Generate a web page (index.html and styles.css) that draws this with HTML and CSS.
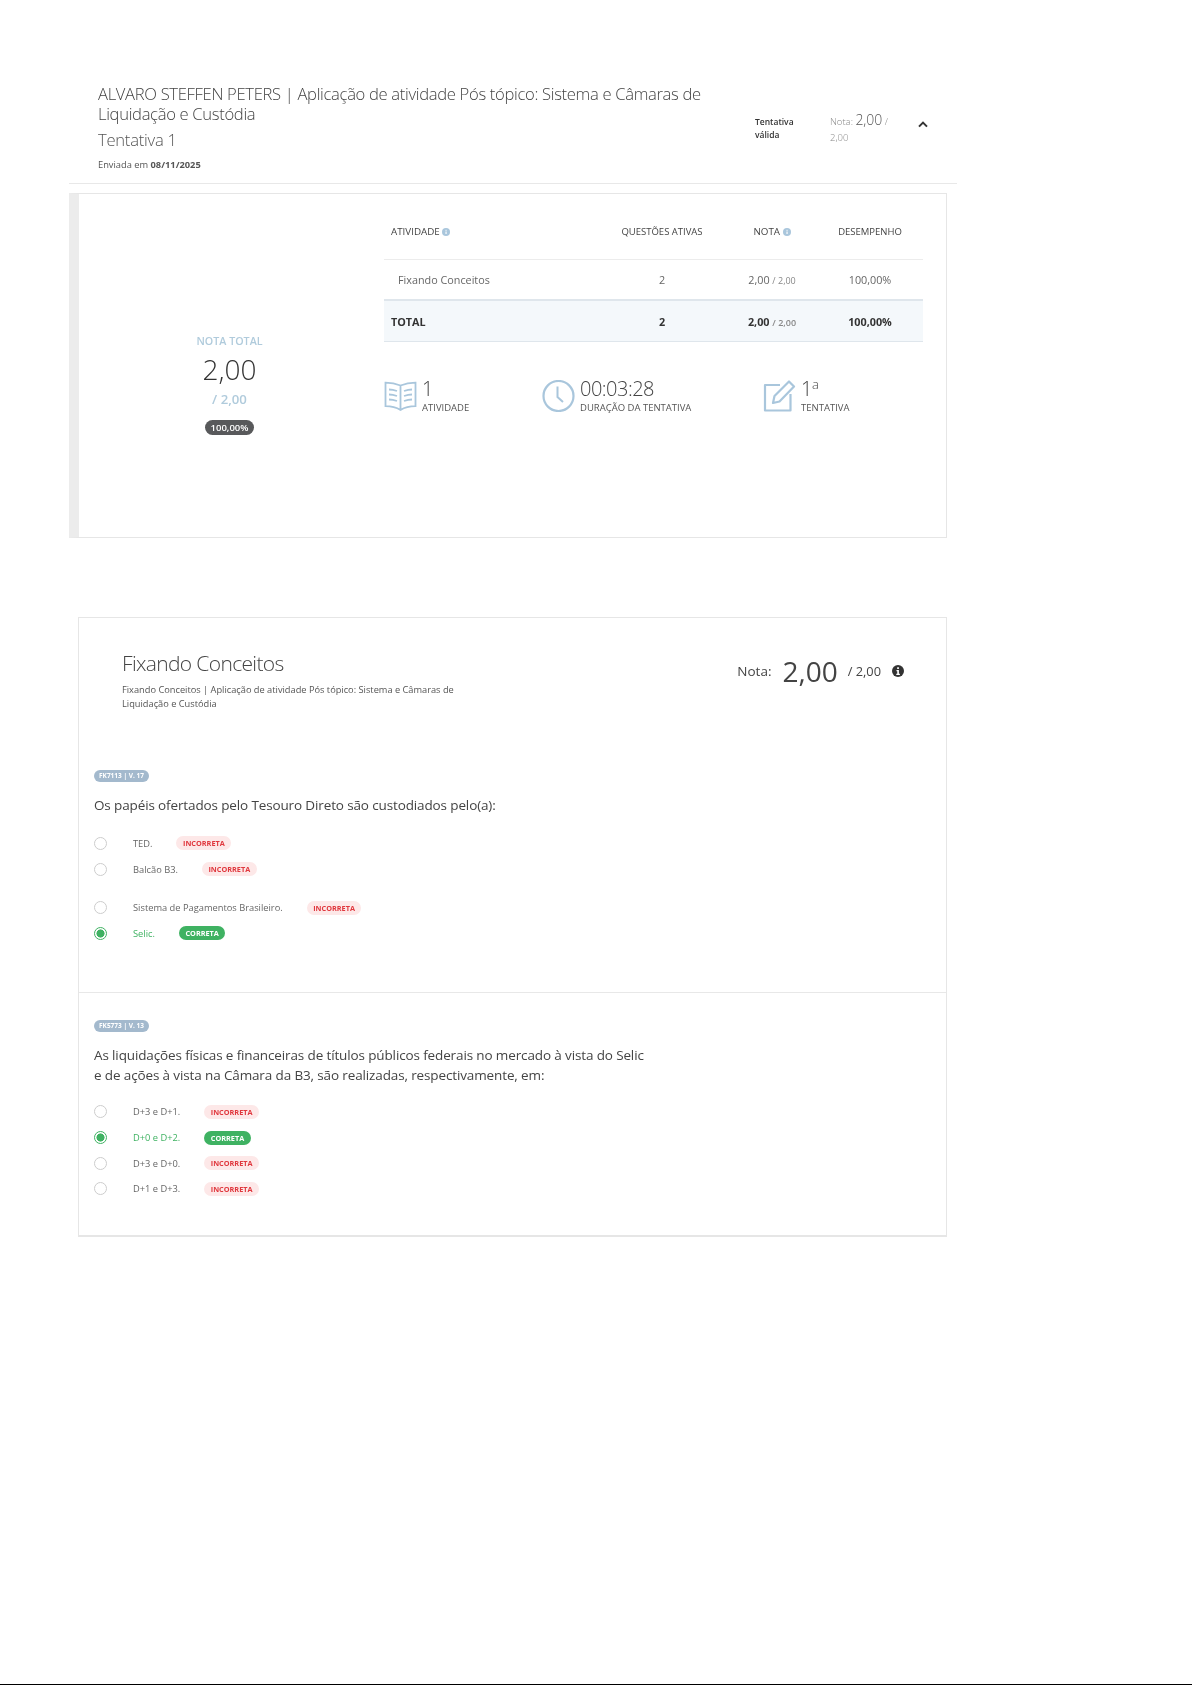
FILE: index.html
```html
<!DOCTYPE html>
<html lang="pt-BR">
<head>
<meta charset="utf-8">
<title>Tentativa 1</title>
<link rel="stylesheet" href="styles.css">
</head>
<body>
<div class="page">
  <header class="attempt-head">
    <div class="attempt-info">
      <h1 class="attempt-title">ALVARO STEFFEN PETERS | Aplicação de atividade Pós tópico: Sistema e Câmaras de Liquidação e Custódia</h1>
      <h2 class="attempt-num">Tentativa 1</h2>
      <p class="attempt-date">Enviada em <b>08/11/2025</b></p>
    </div>
    <div class="attempt-valid">Tentativa válida</div>
    <div class="attempt-grade"><span>Nota:</span> <span class="attempt-grade-big">2,00</span> <span>/</span> <span>2,00</span></div>
    <svg class="chevron" viewBox="0 0 10 7" width="10" height="7"><path d="M1 5.6 5 1.6l4 4" fill="none" stroke="#333" stroke-width="2"/></svg>
  </header>

  <section class="summary">
    <div class="total">
      <div class="total-label">NOTA TOTAL</div>
      <div class="total-value">2,00</div>
      <div class="total-max">/ 2,00</div>
      <div class="total-pill">100,00%</div>
    </div>
    <div class="detail">
      <div class="row row-head">
        <div class="c1">ATIVIDADE <svg class="info" viewBox="0 0 16 16"><circle cx="8" cy="8" r="8" fill="#a9c6dc"/><rect x="7" y="7" width="2.2" height="5" fill="#fff"/><rect x="7" y="3.6" width="2.2" height="2" fill="#fff"/></svg></div>
        <div class="c2">QUESTÕES ATIVAS</div>
        <div class="c3">NOTA <svg class="info" viewBox="0 0 16 16"><circle cx="8" cy="8" r="8" fill="#a9c6dc"/><rect x="7" y="7" width="2.2" height="5" fill="#fff"/><rect x="7" y="3.6" width="2.2" height="2" fill="#fff"/></svg></div>
        <div class="c4">DESEMPENHO</div>
      </div>
      <div class="row row-body">
        <div class="c1 indent">Fixando Conceitos</div>
        <div class="c2">2</div>
        <div class="c3">2,00 <small>/ 2,00</small></div>
        <div class="c4">100,00%</div>
      </div>
      <div class="row row-total">
        <div class="c1">TOTAL</div>
        <div class="c2">2</div>
        <div class="c3">2,00 <small>/ 2,00</small></div>
        <div class="c4">100,00%</div>
      </div>
      <div class="stats">
        <div class="stat stat-a">
          <svg class="stat-icon" viewBox="0 0 33 32" width="33" height="32" fill="none" stroke="#a9c6dc" stroke-width="1.800"><path d="M16.5 5.5C12 3.6 6 2.6 1.5 2.6v23.6c4.500 0 10.500 1 15 3.800 4.500-2.800 10.500-3.800 15-3.800V2.600c-4.500 0-10.500 1-15 2.900Zm0 0V30"/><path d="M5 9.500c2.500 0 5.500.6 8 1.500M5 14.500c2.500 0 5.500.6 8 1.500M5 19.500c2.500 0 5.500.6 8 1.500M28 9.500c-2.500 0-5.500.6-8 1.500M28 14.500c-2.500 0-5.500.6-8 1.500M28 19.500c-2.500 0-5.500.6-8 1.500"/></svg>
          <div><div class="stat-value">1</div><div class="stat-label">ATIVIDADE</div></div>
        </div>
        <div class="stat stat-b">
          <svg class="stat-icon" viewBox="0 0 33 32" width="33" height="32" fill="none" stroke="#a9c6dc" stroke-width="2.200"><circle cx="16.500" cy="16" r="15"/><path d="M15.500 6.500V17l5.500 5" stroke-width="2"/></svg>
          <div><div class="stat-value">00:03:28</div><div class="stat-label">DURAÇÃO DA TENTATIVA</div></div>
        </div>
        <div class="stat">
          <svg class="stat-icon" viewBox="0 0 33 32" width="33" height="32" fill="none" stroke="#a9c6dc" stroke-width="2.200" stroke-linejoin="round"><path d="M17 5H2v25.500h25.500V14"/><path d="M10 23l1.500-7L26 1.500l5 5L16.500 21.500 10 23Z"/></svg>
          <div><div class="stat-value">1<sup>a</sup></div><div class="stat-label">TENTATIVA</div></div>
        </div>
      </div>
    </div>
  </section>

  <section class="activity">
    <div class="activity-head">
      <div class="activity-info">
        <h2 class="activity-title">Fixando Conceitos</h2>
        <p class="activity-sub">Fixando Conceitos | Aplicação de atividade Pós tópico: Sistema e Câmaras de Liquidação e Custódia</p>
      </div>
      <div class="activity-grade">
        <span class="grade-label">Nota:</span>
        <span class="grade-big">2,00</span>
        <span class="grade-max">/ 2,00</span>
        <svg class="grade-info" viewBox="0 0 16 16" width="12" height="12"><circle cx="8" cy="8" r="8" fill="#333"/><path d="M6 6.800h3.200v5H10.500v1.500H5.700v-1.500H7V8.300H6Z" fill="#fff"/><rect x="6.900" y="3" width="2.300" height="2.300" fill="#fff"/></svg>
      </div>
    </div>

    <article class="question q1">
      <span class="tag">FK7113 | V. 17</span>
      <p class="q-text">Os papéis ofertados pelo Tesouro Direto são custodiados pelo(a):</p>
      <ul class="options">
        <li class="opt"><span class="radio"></span><span class="opt-text">TED.</span><span class="pill bad">INCORRETA</span></li>
        <li class="opt"><span class="radio"></span><span class="opt-text">Balcão B3.</span><span class="pill bad">INCORRETA</span></li>
        <li class="opt opt-far"><span class="radio"></span><span class="opt-text">Sistema de Pagamentos Brasileiro.</span><span class="pill bad">INCORRETA</span></li>
        <li class="opt opt-right"><span class="radio on"></span><span class="opt-text">Selic.</span><span class="pill good">CORRETA</span></li>
      </ul>
    </article>

    <article class="question q2">
      <span class="tag">FK5773 | V. 13</span>
      <p class="q-text">As liquidações físicas e financeiras de títulos públicos federais no mercado à vista do Selic e de ações à vista na Câmara da B3, são realizadas, respectivamente, em:</p>
      <ul class="options">
        <li class="opt"><span class="radio"></span><span class="opt-text">D+3 e D+1.</span><span class="pill bad">INCORRETA</span></li>
        <li class="opt opt-right"><span class="radio on"></span><span class="opt-text">D+0 e D+2.</span><span class="pill good">CORRETA</span></li>
        <li class="opt"><span class="radio"></span><span class="opt-text">D+3 e D+0.</span><span class="pill bad">INCORRETA</span></li>
        <li class="opt"><span class="radio"></span><span class="opt-text">D+1 e D+3.</span><span class="pill bad">INCORRETA</span></li>
      </ul>
    </article>
  </section>
  <div class="page-end"></div>
</div>
</body>
</html>
```
FILE: styles.css
```css
* { box-sizing: border-box; }
html, body { margin: 0; padding: 0; background: #fff; }
body { font-family: "Open Sans", "Liberation Sans", sans-serif; color: #555; }
.page { height: 1685px; display: flex; flex-direction: column; padding-top: 80px; overflow: hidden; }
h1, h2, p, ul { margin: 0; padding: 0; }
.attempt-head, .summary, .activity { filter: blur(0.3px); }

.attempt-head { margin-left: 69px; width: 888px; height: 104px; padding-left: 29px; border-bottom: 1px solid #e8e8e8; display: flex; align-items: flex-start; }
.attempt-info { width: 626px; }
.attempt-title { font-size: 16.600px; line-height: 19.500px; font-weight: 300; letter-spacing: -0.32px; color: #444; padding-top: 4px; }
.attempt-num { font-size: 16.600px; line-height: 22px; font-weight: 300; letter-spacing: -0.25px; color: #555; margin-top: 6px; }
.attempt-date { font-size: 9.300px; line-height: 14px; margin-top: 7px; color: #555; }
.attempt-valid { width: 48px; margin: 35px 0 0 31px; font-size: 8.500px; line-height: 13px; font-weight: 600; color: #333; }
.attempt-grade { width: 62px; margin: 32px 0 0 27px; font-size: 9.500px; line-height: 16px; font-weight: 300; color: #888; }
.attempt-grade-big { font-size: 14px; color: #555; }
.chevron { margin: 41px 0 0 26px; }

.summary { margin: 9px 0 0 69px; width: 878px; height: 345px; display: flex; border: 1px solid #e6e6e6; border-left: 10px solid #ececec; }
.total { width: 301px; padding-top: 37px; display: flex; flex-direction: column; align-items: center; justify-content: center; }
.total-label { font-size: 10.700px; line-height: 16px; font-weight: 600; color: #b0cbdc; }
.total-value { font-size: 28px; line-height: 38px; font-weight: 300; color: #333; margin-top: 1px; }
.total-max { font-size: 13.200px; line-height: 20px; font-weight: 600; color: #b0cbdc; margin-top: 1px; }
.total-pill { font-size: 9.500px; line-height: 15px; height: 15px; padding: 0 6px; margin-top: 11px; border-radius: 8px; background: #58595b; color: #fff; font-weight: 600; }

.detail { width: 539px; margin-left: 4px; }
.row { display: grid; grid-template-columns: 213px 130px 90px 106px; align-items: center; font-size: 10.800px; color: #666; }
.c2, .c3, .c4 { text-align: center; }
.c1 { padding-left: 7px; }
.indent { padding-left: 14px; }
.row small { font-size: 9px; color: #888; }
.row-head { height: 66px; padding-top: 10px; font-size: 9.500px; color: #444; border-bottom: 1px solid #ececec; }
.row-head .c1, .row-head .c3 { font-size: 9.800px; }
.row-body { height: 41px; border-bottom: 2px solid #dfe6ec; }
.row-total { height: 41px; font-weight: 700; color: #333; background: #f4f8fb; border-bottom: 1px solid #dfe6ec; }
.row-total small { font-weight: 600; }
.info { width: 8px; height: 8px; vertical-align: -0.5px; }

.stats { display: flex; margin-top: 34px; }
.stat { display: flex; align-items: center; gap: 5px; }
.stat-a { width: 158px; }
.stat-b { width: 221px; }
.stat-value { font-size: 20px; line-height: 25px; font-weight: 300; letter-spacing: -0.5px; color: #444; }
.stat-value sup { font-size: 13px; line-height: 0; vertical-align: 7px; }
.stat-label { font-size: 9.500px; line-height: 14px; color: #555; }

.activity { margin: 79px 0 0 78px; width: 869px; height: 620px; border: 1px solid #e6e6e6; border-bottom-width: 2px; }
.activity-head { height: 152px; padding: 29px 0 0 43px; display: flex; justify-content: space-between; }
.activity-info { width: 340px; }
.activity-title { font-size: 21px; line-height: 32px; font-weight: 300; letter-spacing: -0.65px; color: #444; }
.activity-sub { font-size: 9.250px; line-height: 14px; margin-top: 4px; color: #555; }
.activity-grade { display: flex; align-items: center; height: 42px; margin-right: 42px; margin-top: 3px; color: #444; }
.grade-label { font-size: 13.500px; }
.grade-big { font-size: 28px; margin-left: 11px; line-height: 42px; }
.grade-max { font-size: 12.800px; margin-left: 10px; }
.grade-info { margin-left: 11px; }

.question { padding: 0 0 0 15px; }
.q1 { height: 223px; border-bottom: 1px solid #e8e8e8; }
.q2 { padding-top: 27px; }
.tag { display: block; width: max-content; height: 12px; line-height: 12px; padding: 0 5px; font-size: 6.500px; font-weight: 700; color: #fff; background: #a3b9cd; border-radius: 6px; }
.q-text { width: 560px; font-size: 13.500px; line-height: 19.500px; letter-spacing: -0.13px; color: #444; margin-top: 14px; }
.options { list-style: none; margin-top: 15px; }
.q2 .options { margin-top: 14px; }
.opt { display: flex; align-items: center; height: 25.700px; font-size: 9.300px; color: #666; }
.opt-far { margin-top: 13px; }
.radio { width: 13px; height: 13px; border-radius: 50%; border: 1px solid #ccc; margin-right: 26px; flex: none; }
.radio.on { border-color: #3fb262; background: radial-gradient(circle, #3fb262 0 3.800px, #fff 4.300px); }
.opt-text { margin-right: 24px; }
.opt-right { color: #3fb262; }
.pill { height: 14px; line-height: 14px; padding: 0 6.500px; border-radius: 7px; font-size: 7.300px; font-weight: 700; }
.pill.bad { background: #fde8e8; color: #e0383e; }
.pill.good { background: #3fb262; color: #fff; }

.page-end { margin-top: auto; height: 1px; background: #000; }
```
